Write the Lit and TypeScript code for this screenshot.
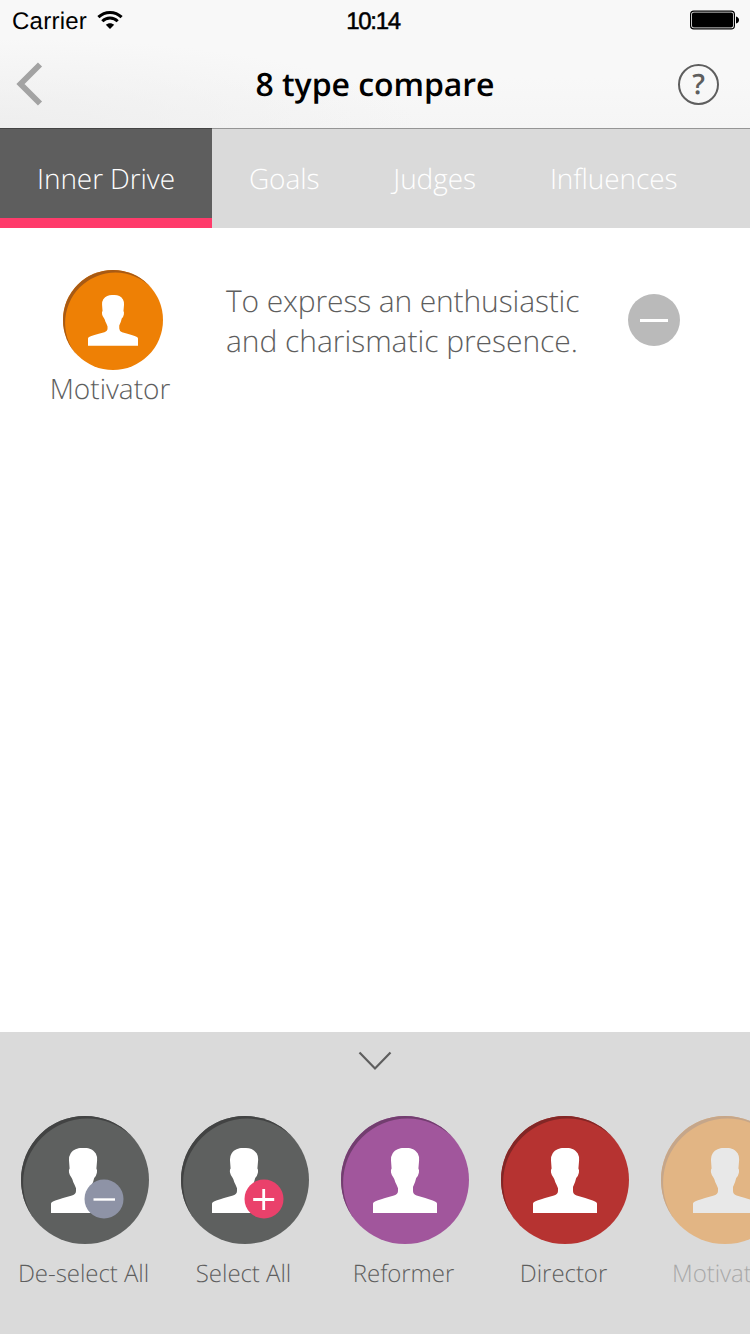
import { LitElement, html, css, svg, nothing } from "lit";
import { customElement, property, state } from "lit/decorators.js";
import { classMap } from "lit/directives/class-map.js";

@customElement("person-avatar")
class PersonAvatar extends LitElement {
  @property() tone = "grey";
  @property() badge = "";

  static styles = css`
    :host { display: block; width: 128px; height: 128px; }
    .disc { width: 100%; height: 100%; border-radius: 50%; }
    .orange { background: #ee8005; box-shadow: inset 2.5px 3px 0 -0.4px #a85a14; }
    .grey { background: #5e605f; box-shadow: inset 2.5px 3px 0 -0.4px #424343; }
    .purple { background: #a1569c; box-shadow: inset 2.5px 3px 0 -0.4px #723e6f; }
    .red { background: #b63331; box-shadow: inset 2.5px 3px 0 -0.4px #822726; }
    svg { display: block; width: 100%; height: 100%; }
  `;

  render() {
    const shift = this.badge === "minus" ? -2 : this.badge === "plus" ? -1 : 0;
    return html`<div class="disc ${this.tone}">
      <svg viewBox="0 0 128 128">
        <path transform="translate(${shift} 0)" fill="#fff"
          d="M32 97V87.6Q32 86.4 34 85.4Q37 84 53 79.6Q57 78.2 57 75V72.3Q55.8 69 54.2 66Q53.6 63.5 52.7 62Q50.6 59.5 50 56.5Q49.6 53.5 50.6 52.6L50 44.5Q49.8 40 51.6 37.4C54.4 33.4 58.5 32 62.5 32H66C70.5 32 74.2 33.6 76.8 37.6Q78.4 40.5 78.1 44.5L77.4 52.6Q78.4 53.8 77.9 56.8Q77.3 60 75.2 62Q74.4 66 72 71V75Q72 78.4 75.6 79.6Q91 84 94 85.4Q96 86.4 96 87.6V97Z"/>
        ${this.badge
          ? svg`<circle cx="83" cy="83" r="19.5" fill=${this.badge === "minus" ? "#8e93a6" : "#ea416b"}/>
              <path d=${this.badge === "minus" ? "M72.5 83.5h21.5" : "M72.2 83.5h21M82.7 73v21"}
                stroke="#fff" stroke-width=${this.badge === "minus" ? 2.4 : 2.8} fill="none"/>`
          : nothing}
      </svg>
    </div>`;
  }
}

@customElement("app-root")
class AppRoot extends LitElement {
  @state() active = 0;

  tabs = ["Inner Drive", "Goals", "Judges", "Influences"];
  types = [
    { name: "De-select All", tone: "grey", badge: "minus" },
    { name: "Select All", tone: "grey", badge: "plus" },
    { name: "Reformer", tone: "purple", badge: "" },
    { name: "Director", tone: "red", badge: "" },
    { name: "Motivator", tone: "orange", badge: "", used: true },
  ];

  static styles = css`
    :host {
      display: flex; flex-direction: column; box-sizing: border-box;
      width: 750px; height: 1334px; overflow: hidden; background: #fff;
      font-family: "Open Sans", sans-serif; font-weight: 300; color: #5e5e5e;
      text-rendering: geometricPrecision;
    }
    .header {
      height: 128px; flex: none;
      background:
        radial-gradient(ellipse 420px 90px at 0 100%, #eeeeee, rgba(246,246,246,0)),
        linear-gradient(#f8f8f8 60%, #f5f5f5);
    }
    .status {
      height: 40px; display: grid; grid-template-columns: 1fr auto 1fr; align-items: center;
      padding: 0 11px 0 12px; font: 400 24px/40px "Liberation Sans", sans-serif; color: #000;
    }
    .carrier { display: flex; align-items: center; gap: 10px; letter-spacing: .25px; }
    .carrier span, .time { padding-top: 3px; line-height: 37px; }
    .carrier span { padding-top: 4px; line-height: 36px; }
    .time { padding-top: 4px; line-height: 36px; letter-spacing: -1.3px; margin-right: 5px; -webkit-text-stroke: .5px #000; }
    .battery { justify-self: end; }
    svg { display: block; }
    .nav { height: 88px; display: grid; grid-template-columns: 1fr auto 1fr; align-items: center; padding: 0 16px; }
    .title { font-size: 32px; font-weight: 600; color: #000; line-height: 44px; padding-top: 2px; letter-spacing: -.06px; }
    .help {
      justify-self: end; box-sizing: border-box; width: 41px; height: 41px; margin-right: 15px; border: 2px solid #5e5e5e; border-radius: 50%;
      font-size: 28px; font-weight: 600; line-height: 37px; text-align: center;
    }
    .tabs { display: flex; height: 100px; flex: none; background: #dadada; box-shadow: inset 0 1px 0 #959595; }
    .tab { box-sizing: border-box; height: 100px; padding: 1px 37px 0; font-size: 28px; line-height: 100px; letter-spacing: -.09px; color: #fff; white-space: nowrap; }
    .tab.on { background: #5e5e5e; box-shadow: inset 0 1px 0 #444, inset 0 -10px 0 #ff3b6b; }
    .content { flex: 1; }
    .row { display: flex; align-items: flex-start; padding: 42px 70px 0 50px; }
    .who { width: 120px; display: flex; flex-direction: column; align-items: center; font-size: 28px; line-height: 38px; }
    .who person-avatar { width: 100px; height: 100px; margin-left: 6px; }
    .desc { flex: 1; margin: 11px 0 0 56px; font-size: 30px; line-height: 40px; white-space: nowrap; letter-spacing: -.04px; }
    .desc .first { letter-spacing: -.14px; }
    .remove { width: 52px; height: 52px; margin-top: 24px; border-radius: 50%; background: #bababa; display: flex; align-items: center; justify-content: center; }
    .remove span { width: 28px; height: 3px; background: #fff; margin-top: 1px; }
    .drawer { height: 302px; flex: none; background: #dadada; }
    .toggle { display: flex; justify-content: center; height: 84px; box-sizing: border-box; padding-top: 18px; }
    .list { display: flex; padding-left: 5px; }
    .item { width: 160px; flex: none; display: flex; flex-direction: column; align-items: center; font-size: 24px; line-height: 33px; white-space: nowrap; }
    .item .name { margin-top: 13px; margin-right: 3px; letter-spacing: -.05px; }
    .item.used { opacity: .4; }
  `;

  render() {
    return html`
      <div class="header">
        <div class="status">
          <div class="carrier"><span>Carrier</span>
            <svg width="26" height="20" viewBox="0 0 26 20">
              <g fill="none" stroke="#000" stroke-width="3">
                <path d="M1.4 7.2C8 .8 18 .8 24.6 7.2"/>
                <path d="M5.3 11.2C9.6 7 16.4 7 20.7 11.2"/>
              </g>
              <path d="M13 19L8.8 14.8C11 12.7 15 12.7 17.2 14.8Z"/>
            </svg>
          </div>
          <div class="time">10:14</div>
          <svg class="battery" width="49" height="20" viewBox="0 0 49 20">
            <rect x=".6" y="1.1" width="43.8" height="17.8" rx="3.2" fill="none" stroke="#000" stroke-width="1.2"/>
            <rect x="2" y="2.5" width="41" height="15" rx="1.8"/>
            <path d="M46 6.5Q49 7.5 49 10T46 13.5Z"/>
          </svg>
        </div>
        <div class="nav">
          <svg width="28" height="44" viewBox="0 0 28 44"><path d="M24 2.5L4.500 22L24 41.500" fill="none" stroke="#a3a3a3" stroke-width="5.800"/></svg>
          <div class="title">8 type compare</div>
          <div class="help">?</div>
        </div>
      </div>
      <div class="tabs">
        ${this.tabs.map((t, i) => html`<div class=${classMap({ tab: true, on: i === this.active })} @click=${() => (this.active = i)}>${t}</div>`)}
      </div>
      <div class="content">
        <div class="row">
          <div class="who"><person-avatar tone="orange"></person-avatar><span>Motivator</span></div>
          <div class="desc"><span class="first">To express an enthusiastic</span><br>and charismatic presence.</div>
          <div class="remove"><span></span></div>
        </div>
      </div>
      <div class="drawer">
        <div class="toggle">
          <svg width="34" height="22" viewBox="0 0 34 22"><path d="M1.5 2.5L17 18.5L32.5 2.5" fill="none" stroke="#5e5e5e" stroke-width="2.2"/></svg>
        </div>
        <div class="list">
          ${this.types.map((t) => html`<div class=${classMap({ item: true, used: !!t.used })}>
            <person-avatar tone=${t.tone} badge=${t.badge}></person-avatar>
            <span class="name">${t.name}</span>
          </div>`)}
        </div>
      </div>
    `;
  }
}
